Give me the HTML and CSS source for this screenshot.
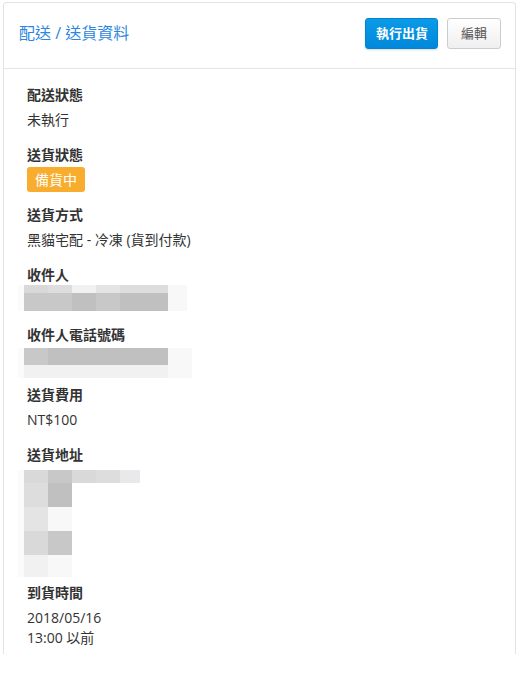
FILE: index.html
```html
<!DOCTYPE html>
<html lang="zh-Hant">
<head>
    <meta charset="UTF-8">
    <meta name="viewport" content="width=device-width, initial-scale=1.0">
    <title>配送 / 送貨資料</title>
    <link rel="stylesheet" href="styles.css">
</head>
<body>
    <div class="card">
        <div class="card-header">
            <h3 class="card-title">配送 / 送貨資料</h3>
            <div class="actions">
                <button class="btn btn-primary" type="button">執行出貨</button>
                <button class="btn btn-default" type="button">編輯</button>
            </div>
        </div>
        <div class="card-body">
            <div class="field">
                <div class="field-label">配送狀態</div>
                <div class="field-value">未執行</div>
            </div>
            <div class="field">
                <div class="field-label">送貨狀態</div>
                <div class="field-value"><span class="badge">備貨中</span></div>
            </div>
            <div class="field">
                <div class="field-label">送貨方式</div>
                <div class="field-value">黑貓宅配 - 冷凍 (貨到付款)</div>
            </div>
            <div class="field">
                <div class="field-label">收件人</div>
                <div class="blur blur-name">
                    <i class="c0"></i><i class="c3"></i><i class="c4"></i><i class="c7"></i><i class="c5"></i><i class="c4"></i><i class="c8"></i>
                    <i class="c0"></i><i class="c1"></i><i class="c1"></i><i class="c2"></i><i class="c1"></i><i class="c2"></i><i class="c8"></i>
                </div>
            </div>
            <div class="field">
                <div class="field-label">收件人電話號碼</div>
                <div class="blur blur-phone">
                    <i class="c0"></i><i class="c1"></i><i class="c2"></i><i class="c8"></i>
                    <i class="c0"></i><i class="c7"></i><i class="c7"></i><i class="c8"></i>
                </div>
            </div>
            <div class="field">
                <div class="field-label">送貨費用</div>
                <div class="field-value">NT$100</div>
            </div>
            <div class="field">
                <div class="field-label">送貨地址</div>
                <div class="blur blur-address">
                    <i class="c0"></i><i class="c3"></i><i class="c1"></i><i class="c3"></i><i class="c4"></i><i class="c6"></i>
                    <i class="c0"></i><i class="c4"></i><i class="c2"></i><i></i><i></i><i></i>
                    <i class="c0"></i><i class="c5"></i><i class="c8"></i><i></i><i></i><i></i>
                    <i class="c0"></i><i class="c3"></i><i class="c1"></i><i></i><i></i><i></i>
                    <i class="c0"></i><i class="c7"></i><i class="c8"></i><i></i><i></i><i></i>
                </div>
            </div>
            <div class="field">
                <div class="field-label">到貨時間</div>
                <div class="field-value">2018/05/16<br>13:00 以前</div>
            </div>
        </div>
    </div>
</body>
</html>
```

FILE: styles.css
```css
body {
    margin: 0;
    background: #fff;
    font-family: "Open Sans", "Noto Sans CJK TC", sans-serif;
    font-size: 14px;
    line-height: 20px;
    color: #333;
}
.card {
    margin: 2px 4px 0 3px;
    border: 1px solid #e3e3e3;
    border-bottom: none;
    border-radius: 4px 4px 0 0;
    background: #fff;
}
.card-header {
    display: flex;
    justify-content: space-between;
    align-items: flex-start;
    padding: 15px 14px 19px 15px;
    border-bottom: 1px solid #e5e5e5;
}
.card-title {
    margin: 0;
    font-size: 16px;
    font-weight: normal;
    line-height: 31px;
    color: #2b86df;
}
.actions {
    display: flex;
    gap: 9px;
}
.btn {
    height: 31px;
    font-family: inherit;
    font-size: 13px;
    line-height: 17px;
    border-radius: 3px;
    cursor: pointer;
}
.btn-primary {
    padding: 0 9px 0 10px;
    color: #fff;
    font-weight: bold;
    background: linear-gradient(#0a9ae8, #0088da);
    border: 1px solid #0683cf;
    box-shadow: 0 1px 2px rgba(0, 0, 0, 0.15);
}
.btn-default {
    padding: 0 13px;
    color: #555;
    background: linear-gradient(#fff, #efefef);
    border: 1px solid #ccc;
}
.card-body {
    padding: 16px 23px 6px 23px;
}
.field {
    margin-bottom: 15px;
}
.field:last-child {
    margin-bottom: 0;
}
.field-label {
    font-weight: bold;
    margin-bottom: 5px;
}
.badge {
    display: inline;
    padding: 3px 8px;
    border-radius: 3px;
    background: #f9ad2e;
    color: #fff;
}
.blur {
    display: grid;
    margin-left: -9px;
}
.blur i {
    display: block;
}
.blur-name {
    grid-template-columns: 6px 24px 24px 24px 24px 48px 19px;
    grid-template-rows: 8px 18px;
    margin-top: -5px;
    margin-bottom: -1px;
}
.blur-phone {
    grid-template-columns: 6px 24px 120px 24px;
    grid-template-rows: 17px 13px;
    margin-top: -2px;
    margin-bottom: -8px;
}
.blur-address {
    grid-template-columns: 6px 24px 24px 24px 24px 20px;
    grid-template-rows: 13px 24px 24px 24px 22px;
    margin-top: 2px;
    margin-bottom: -9px;
}
.c0 { background: #fbfbfb; }
.c1 { background: #c8c8c8; }
.c2 { background: #c0c0c0; }
.c3 { background: #d9d9d9; }
.c4 { background: #dddddd; }
.c5 { background: #e4e4e4; }
.c6 { background: #e9e9eb; }
.c7 { background: #f1f1f1; }
.c8 { background: #f8f8f8; }
```
